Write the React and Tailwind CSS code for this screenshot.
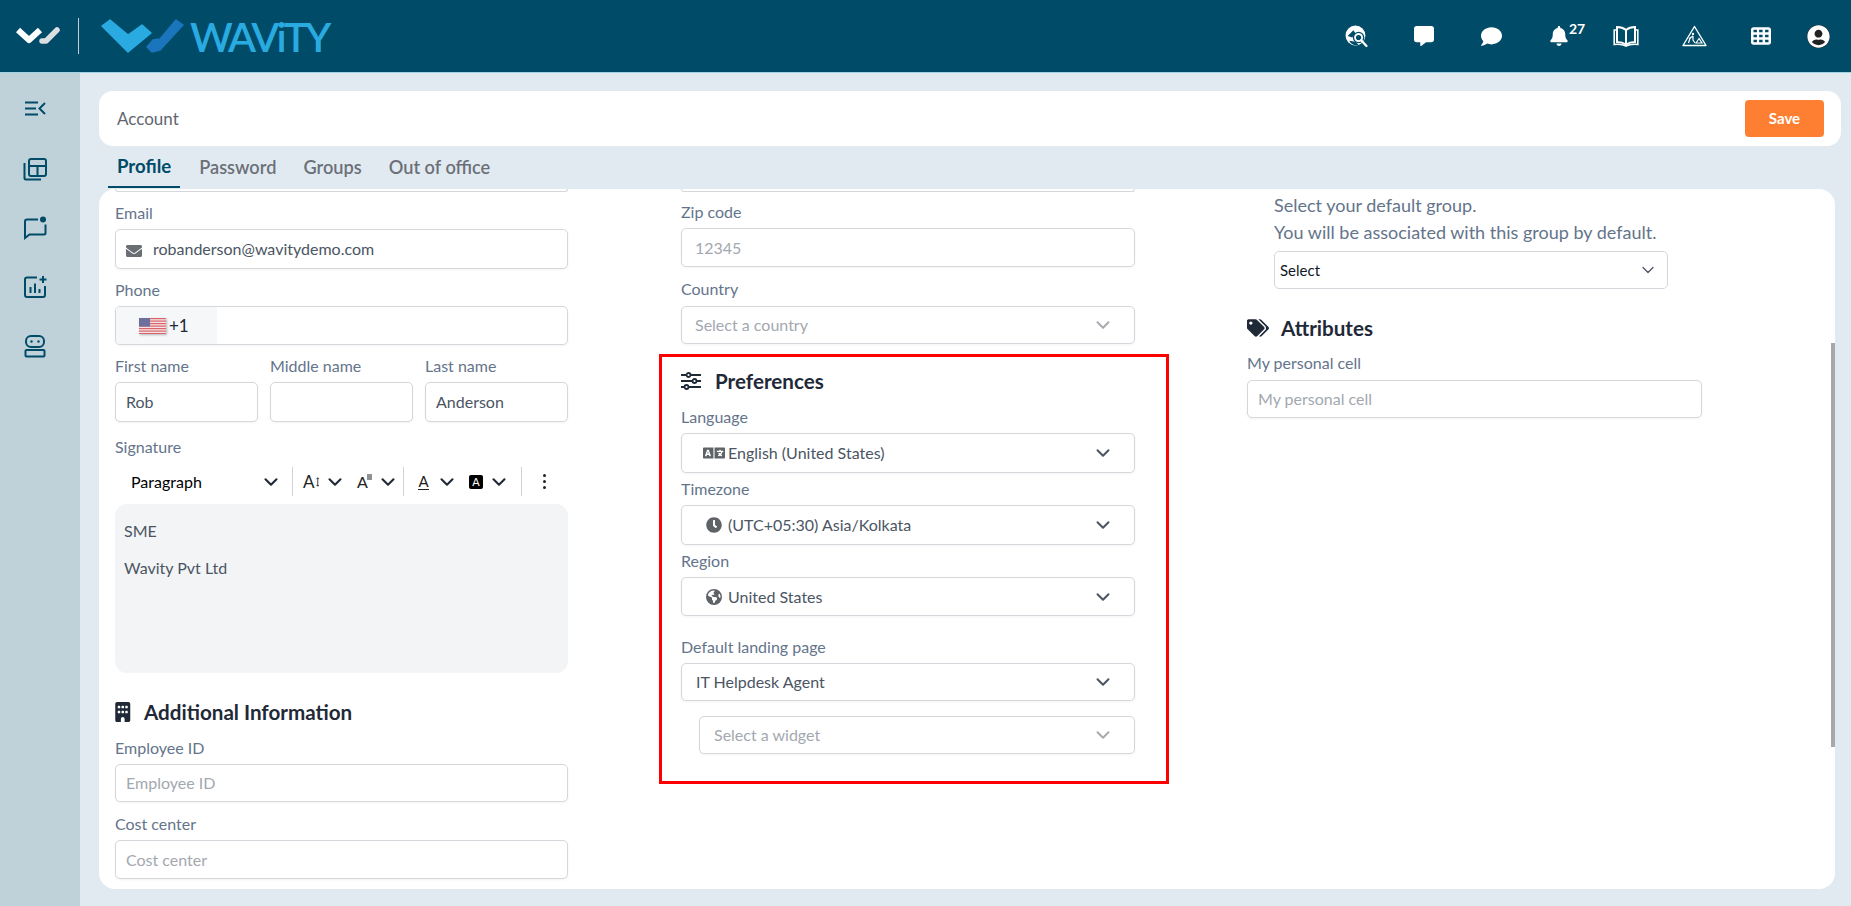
import React from 'react';
import { ChevronDown } from 'lucide-react';
import { FaBell, FaClock, FaComment, FaEnvelope, FaLanguage, FaTags, FaUserCircle } from 'react-icons/fa';
import { FaBuilding, FaEarthAmericas, FaMessage, FaTableCells } from 'react-icons/fa6';

const Label = ({ children }) => (
  <div className="h-[20px] text-[16px] leading-[20px] text-[#64748b]">{children}</div>
);

const Box = ({ h = 'h-[40px]', className = '', children }) => (
  <div className={`${h} flex items-center bg-white border border-[#d4d7db] rounded-[5px] shadow-[0_1px_3px_rgba(0,0,0,0.05)] ${className}`}>
    {children}
  </div>
);

const TextField = ({ h, value, placeholder, pad = 'px-[10px]' }) => (
  <Box h={h} className={`${pad} text-[16px]`}>
    {value ? <span className="text-[#4b5563]">{value}</span> : <span className="text-[#a3a8af]">{placeholder}</span>}
  </Box>
);

const SelectField = ({ h, icon, text, muted, pad = 'pl-[13px]' }) => (
  <Box h={h} className={`${pad} pr-[20px] text-[16px]`}>
    {icon && <span className="w-[24px] flex justify-center mr-[2px] text-[#5f6368]">{icon}</span>}
    <span className={muted ? 'text-[#a3a8af]' : 'text-[#4b5563]'}>{text}</span>
    <ChevronDown size={22} strokeWidth={2.2} className={`ml-auto ${muted ? 'text-[#a8abb0]' : 'text-[#4b5563]'}`} />
  </Box>
);

const Heading = ({ icon, gap, children }) => (
  <div className="h-[28px] flex items-center text-[20.6px] font-bold text-[#1f2937]">
    <span className={`flex items-center ${gap}`}>{icon}</span>
    {children}
  </div>
);

const Stub = () => <div className="h-[3px] border-x border-b border-[#d4d7db] rounded-b-[5px]" />;

const SmallChevron = ({ className = 'ml-[-2.5px]' }) => (
  <ChevronDown size={22} strokeWidth={2.3} className={`shrink-0 mr-[-2.5px] text-[#1f2937] ${className}`} />
);

const Flag = () => (
  <svg width="27" height="16" viewBox="0 0 27 16" className="drop-shadow-[1px_1px_1px_rgba(0,0,0,0.25)]">
    <rect width="27" height="16" fill="#f6e4e4" />
    {[0, 2.5, 5, 7.5, 10, 12.5, 15].map((y) => (
      <rect key={y} y={y} width="27" height="1.2" fill="#d8636b" />
    ))}
    <rect width="11" height="8.5" fill="#6d6f9e" />
  </svg>
);

const LogoMark = () => (
  <svg width="84" height="35" viewBox="0 0 84 35" stroke="none">
    <polygon points="1,7 9,1 27,16 41,6 50,14 27,33" fill="#29abe2" stroke="#29abe2" strokeWidth="1.5" strokeLinejoin="round" />
    <polygon points="46,28 52,21 59,20 75,1 82,6 59,31 51,33" fill="#1b75bc" stroke="#1b75bc" strokeWidth="1.5" strokeLinejoin="round" />
  </svg>
);

const SmallMark = () => (
  <svg width="46" height="20" viewBox="0 0 46 20" fill="none">
    <path d="M2 4 L13 14 L24 4" stroke="#fff" strokeWidth="6" strokeLinejoin="round" />
    <path d="M26 15 L30 15 L41 4" stroke="#dcdfe1" strokeWidth="5.5" strokeLinejoin="round" strokeLinecap="round" />
  </svg>
);

const GlobeSearch = () => (
  <svg width="23" height="23" viewBox="0 0 22 22">
    <circle cx="10" cy="10" r="9.5" fill="#fff" />
    <path d="M2.5 10.5 L8 5 L10 8 L7 12 Z" fill="#004b67" />
    <path d="M4 15 C6 19 10 20 13 19 L10 16 Z" fill="#004b67" />
    <circle cx="13" cy="12" r="5.5" fill="#004b67" />
    <circle cx="13" cy="12" r="3.4" fill="#004b67" stroke="#fff" strokeWidth="1.8" />
    <path d="M15.5 14.5 L20.5 20" stroke="#fff" strokeWidth="2.2" strokeLinecap="round" />
  </svg>
);

const BookIcon = () => (
  <svg width="26" height="22" viewBox="0 0 26 22" fill="none" stroke="#fff" strokeWidth="2">
    <path d="M13 5 C10 2.5 7 2 4 2 V17 C7 17 10 17.5 13 19.5 C16 17.5 19 17 22 17 V2 C19 2 16 2.5 13 5 Z M13 5 V19.5" fill="none" />
    <path d="M4 5 H1.2 V19.5 C6 19 10 19.5 13 21 C16 19.5 20 19 24.8 19.5 V5 H22" strokeWidth="1.6" />
  </svg>
);

const RoadSign = () => (
  <svg width="25" height="22" viewBox="0 0 25 22" fill="none" stroke="#fff">
    <path d="M12.5 1.5 L24 20.5 H1 Z" strokeWidth="1.4" strokeLinejoin="round" />
    <circle cx="11" cy="9" r="1.2" fill="#fff" stroke="none" />
    <path d="M11 11 L8 13 L6.5 18 M11 11 L11 15 L13 18 M9 13 L7 14" strokeWidth="1.2" />
    <path d="M14 18 L17 13.5 L20 18 Z" strokeWidth="1.2" />
  </svg>
);

const SideMenu = () => (
  <svg width="24" height="24" viewBox="0 0 24 24" fill="none" stroke="#004b67" strokeWidth="2">
    <path d="M2 5.5 H15 M2 11.5 H13 M2 17.5 H15 M22 6 L16.5 11.5 L22 17" />
  </svg>
);

const SideLayout = () => (
  <svg width="24" height="24" viewBox="0 0 24 24" fill="none" stroke="#004b67" strokeWidth="2">
    <rect x="6" y="2" width="17" height="17" rx="2" />
    <path d="M6 9 H23 M14.5 9 V19" />
    <path d="M1.5 6 V21 C1.5 22 2 22.5 3 22.5 H18" />
  </svg>
);

const SideChat = () => (
  <svg width="24" height="24" viewBox="0 0 24 24" fill="none" stroke="#004b67" strokeWidth="2">
    <path d="M15 3.5 H4 C2.8 3.5 2 4.3 2 5.5 V22 L6.5 18.5 H21 C22 18.5 22.5 18 22.5 17 V8.5" />
    <circle cx="20" cy="3.5" r="3" fill="#004b67" stroke="none" />
  </svg>
);

const SideReport = () => (
  <svg width="24" height="24" viewBox="0 0 24 24" fill="none" stroke="#004b67" strokeWidth="2">
    <path d="M14 2.5 H4 C3 2.5 2 3.5 2 4.5 V20 C2 21 3 22 4 22 H20 C21 22 22 21 22 20 V11" />
    <path d="M7.5 18 V12 M12 18 V8.5 M16.5 18 V14" />
    <path d="M20 1 V8 M16.5 4.5 H23.5" />
  </svg>
);

const SideBot = () => (
  <svg width="24" height="24" viewBox="0 0 24 24" fill="none" stroke="#004b67" strokeWidth="2">
    <rect x="3" y="2" width="18" height="11" rx="5" />
    <rect x="2.5" y="16" width="19" height="6.5" rx="1" />
    <circle cx="8.5" cy="7.5" r="1.2" fill="#004b67" stroke="none" />
    <circle cx="15.5" cy="7.5" r="1.2" fill="#004b67" stroke="none" />
  </svg>
);

const PrefIcon = () => (
  <svg width="20" height="20" viewBox="0 0 20 20" fill="none" stroke="#1f2937" strokeWidth="1.8">
    <path d="M0 4 H5 M10 4 H20 M0 10 H11 M16 10 H20 M0 16 H3 M8 16 H20" />
    <circle cx="7.5" cy="4" r="2" />
    <circle cx="13.5" cy="10" r="2" />
    <circle cx="5.5" cy="16" r="2" />
  </svg>
);

const Sep = ({ className = '' }) => <div className={`w-px h-[29px] shrink-0 bg-[#cfd2d6] ${className}`} />;

export default function App() {
  return (
    <div className="h-screen flex flex-col overflow-hidden bg-[#e2eaf1] [font-family:Lato,sans-serif]">
      {/* top bar */}
      <header className="h-[73px] shrink-0 flex items-center bg-[#004b67] border-b border-[#9fd6e6]">
        <div className="ml-[16px] w-[46px] flex"><SmallMark /></div>
        <div className="ml-[16px] w-px h-[36px] bg-[#c5ced3]" />
        <div className="ml-[22px] w-[89px] flex items-center"><LogoMark /></div>
        <span className="text-[41px] leading-none font-semibold tracking-[-2.8px] text-[#29abe2]">WAViTY</span>
        <div className="ml-auto flex items-center text-white h-full">
          <div className="w-[68px] flex justify-center"><GlobeSearch /></div>
          <div className="w-[67px] flex justify-center"><FaMessage size={20} /></div>
          <div className="w-[68px] flex justify-center"><FaComment size={21} /></div>
          <div className="w-[67px] flex justify-center relative">
            <FaBell size={20} />
            <span className="absolute left-[44px] -top-[8px] text-[14px] font-bold">27</span>
          </div>
          <div className="w-[67px] flex justify-center"><BookIcon /></div>
          <div className="w-[68px] pl-[2px] flex justify-center"><RoadSign /></div>
          <div className="w-[67px] flex justify-center"><FaTableCells size={20} /></div>
          <div className="w-[57px] pr-[9px] flex justify-center">
            <span className="bg-[#222] rounded-full"><FaUserCircle size={23} /></span>
          </div>
        </div>
      </header>

      <div className="flex-1 flex min-h-0">
        {/* side rail */}
        <aside className="w-[80px] shrink-0 bg-[#bfd2da] flex flex-col items-center pt-[24px] gap-[35px] pr-[10px]">
          <div className="mb-[1px]"><SideMenu /></div>
          <SideLayout />
          <SideChat />
          <SideReport />
          <SideBot />
        </aside>

        <main className="flex-1 min-w-0 flex flex-col pl-[19px] pr-[10px] pt-[18px] pb-[17px]">
          <div className="h-[55px] shrink-0 flex items-center bg-white rounded-[14px] pl-[18px] pr-[17px]">
            <span className="text-[17px] text-[#5f6670]">Account</span>
            <button className="ml-auto w-[79px] h-[37px] bg-[#ff7f32] rounded-[4px] text-white text-[15px] font-bold">Save</button>
          </div>

          <div className="h-[42px] shrink-0 flex items-end ml-[9px] gap-[9px]">
            <div className="h-[41px] px-[9px] mr-[1px] flex items-center text-[18.6px] font-bold text-[#004b67] border-b-2 border-[#004b67]">Profile</div>
            <div className="h-[41px] px-[9px] flex items-center text-[18.2px] font-semibold text-[#6b7078]">Password</div>
            <div className="h-[41px] px-[9px] flex items-center text-[18.2px] font-semibold text-[#6b7078]">Groups</div>
            <div className="h-[41px] px-[9px] flex items-center text-[18.2px] font-semibold text-[#6b7078]">Out of office</div>
          </div>

          <div className="relative flex-1 min-h-0 mt-[1px] mr-[6px] bg-white rounded-[16px] overflow-hidden pl-[16px] grid grid-cols-[453px_454px_454px] gap-x-[113px] content-start">
            {/* left column */}
            <section>
              <Stub />
              <div className="mt-[11px]"><Label>Email</Label></div>
              <Box h="h-[40px]" className="mt-[6px] pl-[10px] text-[16px] text-[#4b5563]">
                <FaEnvelope size={16} className="text-[#6b6f75] mt-[4px] mr-[11px]" />
                robanderson@wavitydemo.com
              </Box>
              <div className="mt-[11px]"><Label>Phone</Label></div>
              <Box h="h-[39px]" className="mt-[6px] overflow-hidden">
                <div className="w-[101px] h-full bg-[#f6f7f9] flex items-center pl-[23px] text-[17px] text-[#1f2937]">
                  <Flag />
                  <span className="ml-[3px]">+1</span>
                </div>
              </Box>
              <div className="mt-[11px] grid grid-cols-3 gap-x-[12px]">
                <div>
                  <Label>First name</Label>
                  <div className="mt-[6px]"><TextField value="Rob" /></div>
                </div>
                <div>
                  <Label>Middle name</Label>
                  <div className="mt-[6px]"><TextField /></div>
                </div>
                <div>
                  <Label>Last name</Label>
                  <div className="mt-[6px]"><TextField value="Anderson" /></div>
                </div>
              </div>
              <div className="mt-[15px]"><Label>Signature</Label></div>

              <div className="mt-[10px] h-[29px] flex items-center text-[#222]">
                <div className="ml-[16px] w-[131px] shrink-0 h-[19px] overflow-hidden text-[16px] leading-[20px] text-black">Paragraph</div>
                <SmallChevron />
                <Sep className="ml-[13px]" />
                <span className="ml-[10px] w-[16px] shrink-0 flex items-center text-[17px] leading-none">
                  A
                  <svg width="5" height="14" viewBox="0 0 5 14" fill="none" stroke="#222" strokeWidth="1.2" className="ml-[1px]">
                    <path d="M2.5 1 V13 M0.5 3 L2.5 1 L4.5 3 M0.5 11 L2.5 13 L4.5 11" />
                  </svg>
                </span>
                <SmallChevron className="ml-[5px]" />
                <span className="ml-[13.5px] w-[15px] shrink-0 flex items-start text-[16px] leading-none">
                  A
                  <svg width="5" height="6" viewBox="0 0 5 6" fill="none" stroke="#222" strokeWidth="1" className="-ml-[1px] shrink-0">
                    <path d="M0 1 H5 M0 3 H5 M0 5 H5" />
                  </svg>
                </span>
                <SmallChevron className="ml-[5px]" />
                <Sep className="ml-[6.5px]" />
                <span className="ml-[14px] w-[11px] shrink-0 text-center text-[15px] leading-[15px] border-b border-[#222]">A</span>
                <SmallChevron className="ml-[7px]" />
                <span className="ml-[13.5px] w-[14px] h-[14px] shrink-0 bg-black text-white rounded-[2px] text-[11px] leading-[14px] text-center">A</span>
                <SmallChevron className="ml-[5px]" />
                <Sep className="ml-[13.5px]" />
                <div className="ml-[21px] flex flex-col gap-[3px]">
                  <span className="w-[3px] h-[3px] rounded-full bg-[#222]" />
                  <span className="w-[3px] h-[3px] rounded-full bg-[#222]" />
                  <span className="w-[3px] h-[3px] rounded-full bg-[#222]" />
                </div>
              </div>

              <div className="mt-[8px] h-[169px] bg-[#f3f4f6] rounded-[12px] pl-[9px] pt-[17px] text-[16px] leading-[20px] text-[#4b5563]">
                <p>SME</p>
                <p className="mt-[17px]">Wavity Pvt Ltd</p>
              </div>

              <div className="mt-[25px]">
                <Heading icon={<FaBuilding className="w-[17.5px] h-[20px] -ml-[1px] text-[#1f2937]" />} gap="w-[29px]">Additional Information</Heading>
              </div>
              <div className="mt-[12px]"><Label>Employee ID</Label></div>
              <div className="mt-[6px]"><TextField h="h-[38px]" placeholder="Employee ID" /></div>
              <div className="mt-[12px]"><Label>Cost center</Label></div>
              <div className="mt-[6px]"><TextField h="h-[39px]" placeholder="Cost center" /></div>
            </section>

            {/* middle column */}
            <section>
              <Stub />
              <div className="mt-[10px]"><Label>Zip code</Label></div>
              <div className="mt-[6px]"><TextField h="h-[39px]" placeholder="12345" pad="px-[13px]" /></div>
              <div className="mt-[12px]"><Label>Country</Label></div>
              <div className="mt-[7px]"><SelectField h="h-[38px]" text="Select a country" muted /></div>

              <div className="mt-[10px] -ml-[22px] -mr-[34px] pl-[19px] pr-[31px] pt-[10px] h-[430px] border-[3px] border-[#ff0000]">
                <Heading icon={<PrefIcon />} gap="w-[34px]">Preferences</Heading>
                <div className="mt-[12px]"><Label>Language</Label></div>
                <div className="mt-[6px]"><SelectField icon={<FaLanguage size={22} />} text="English (United States)" pad="pl-[20px]" /></div>
                <div className="mt-[6px]"><Label>Timezone</Label></div>
                <div className="mt-[6px]"><SelectField icon={<FaClock size={16} />} text="(UTC+05:30) Asia/Kolkata" pad="pl-[20px]" /></div>
                <div className="mt-[6px]"><Label>Region</Label></div>
                <div className="mt-[6px]"><SelectField h="h-[39px]" icon={<FaEarthAmericas size={16} />} text="United States" pad="pl-[20px]" /></div>
                <div className="mt-[21px]"><Label>Default landing page</Label></div>
                <div className="mt-[6px]"><SelectField h="h-[38px]" text="IT Helpdesk Agent" pad="pl-[14px]" /></div>
                <div className="mt-[15px] ml-[18px]"><SelectField h="h-[38px]" text="Select a widget" muted pad="pl-[14px]" /></div>
              </div>
            </section>

            {/* right column */}
            <section className="-ml-[1px]">
              <div className="ml-[27px] pt-[3px] text-[18px] leading-[27px] text-[#64748b]">
                <p>Select your default group.</p>
                <p>You will be associated with this group by default.</p>
              </div>
              <div className="ml-[27px] mt-[5px] w-[394px] h-[38px] flex items-center bg-white border border-[#d4d7db] rounded-[5px] pl-[5px] pr-[9px] text-[15px] text-[#111827]">
                Select
                <ChevronDown size={20} strokeWidth={1.5} className="ml-auto text-[#4b5563]" />
              </div>
              <div className="mt-[25px]">
                <Heading icon={<FaTags size={22} className="text-[#1f2937]" />} gap="w-[34px]">Attributes</Heading>
              </div>
              <div className="mt-[11px]"><Label>My personal cell</Label></div>
              <div className="mt-[7px]"><TextField h="h-[38px]" placeholder="My personal cell" /></div>
            </section>

            {/* scrollbar thumb */}
            <div className="absolute right-0 top-[154px] w-[4px] h-[404px] bg-[#a8a8a8]" />
          </div>
        </main>
      </div>
    </div>
  );
}
